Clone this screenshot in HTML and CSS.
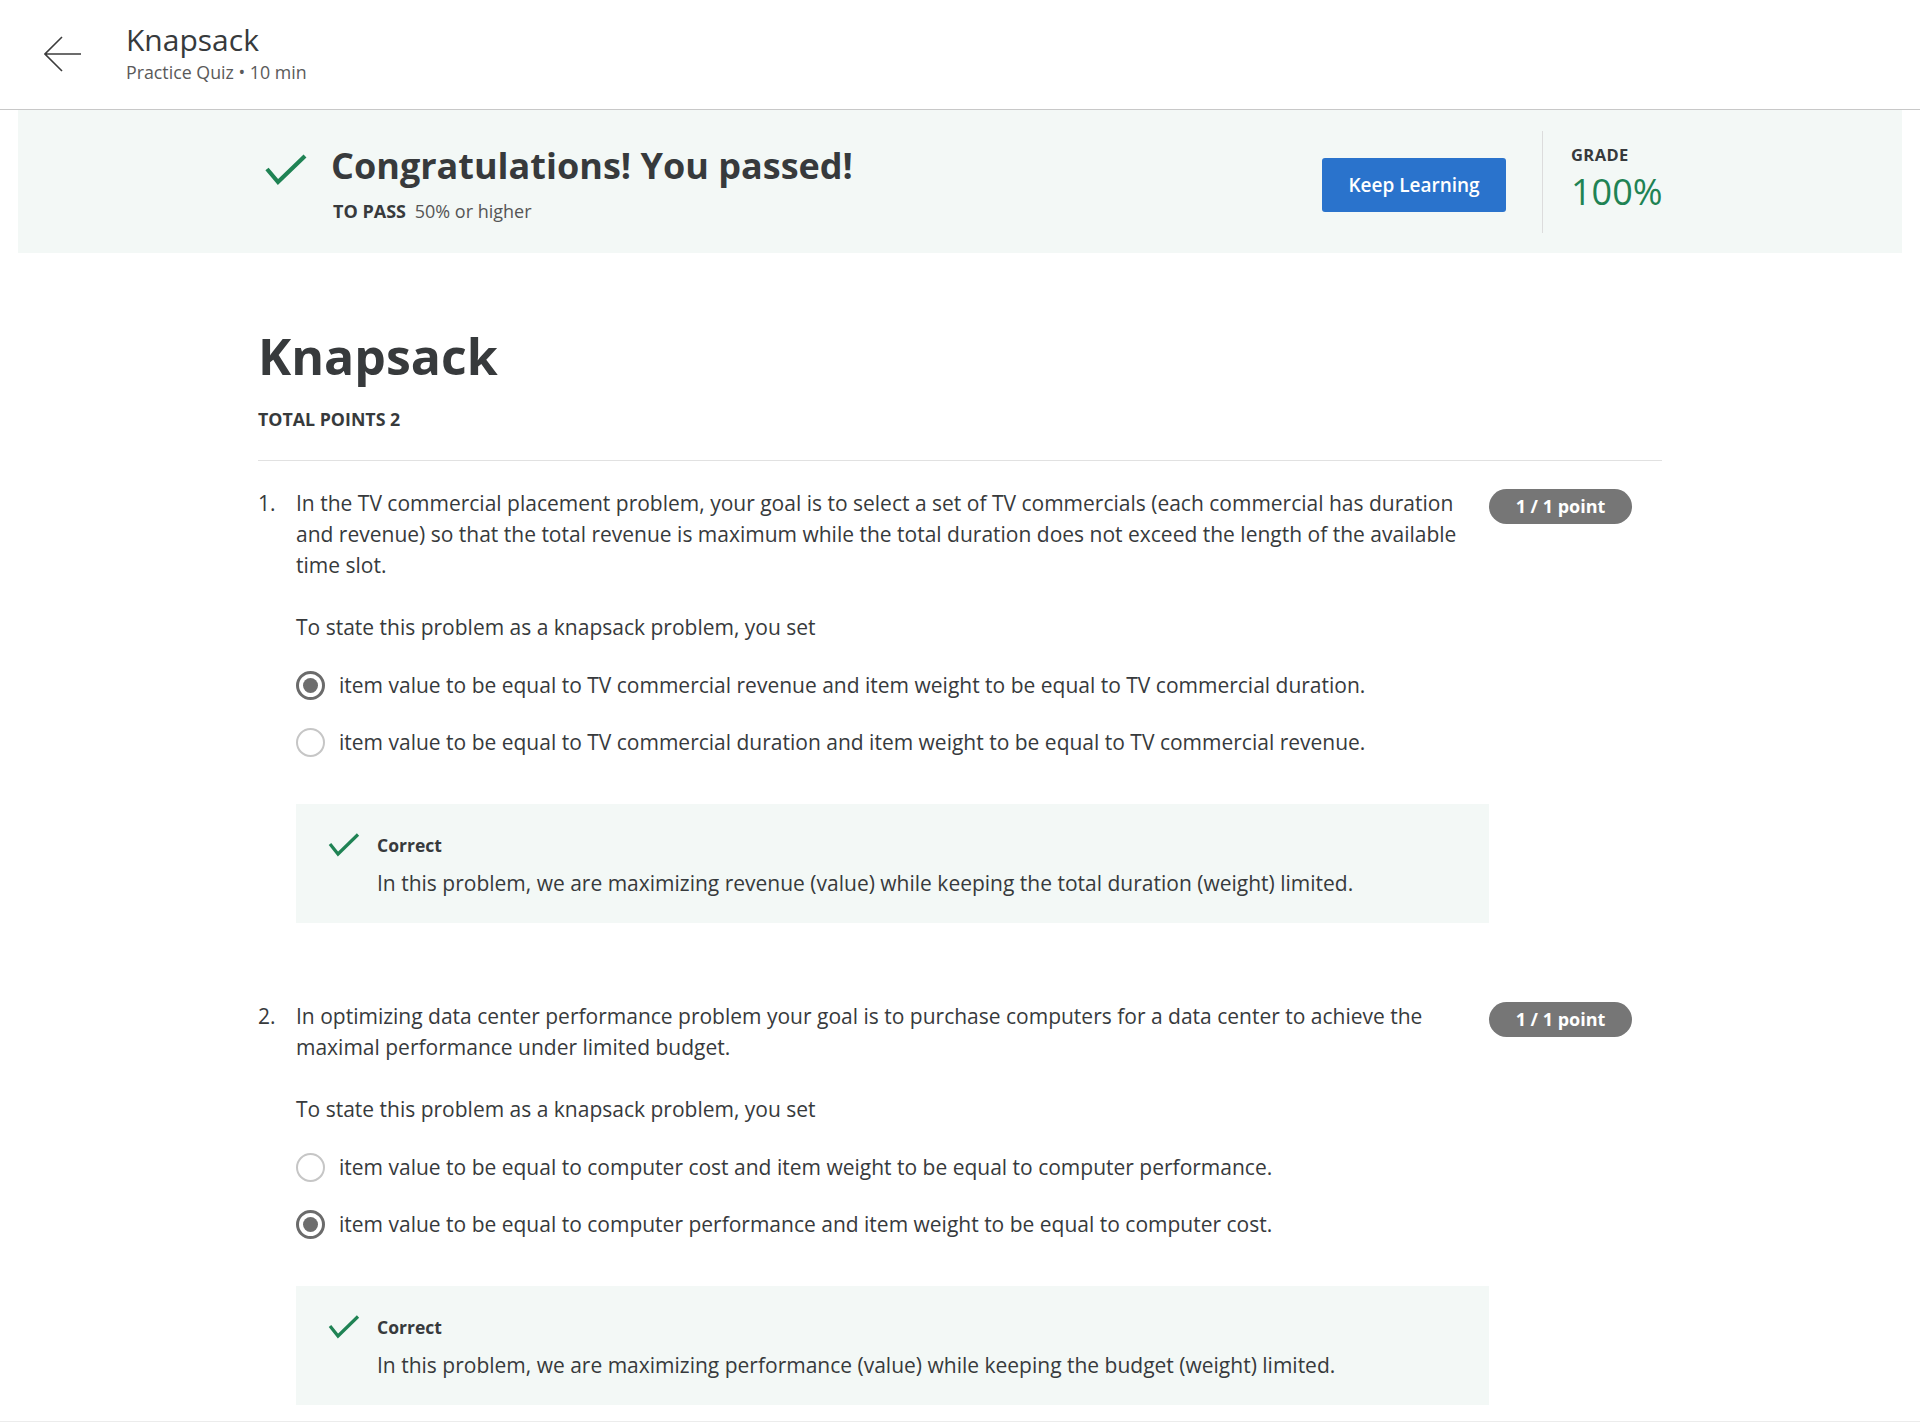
FILE: index.html
```html
<!DOCTYPE html>
<html lang="en">
<head>
<meta charset="utf-8">
<title>Knapsack</title>
<link rel="stylesheet" href="styles.css">
</head>
<body>
<header class="topbar">
  <a class="back" href="#" aria-label="Back">
    <svg width="38" height="36" viewBox="0 0 38 36"><path d="M18 1 L1 18 L18 35 M1 18 H37" fill="none" stroke="#3c3c3c" stroke-width="1.6"/></svg>
  </a>
  <div class="titles">
    <div class="title">Knapsack</div>
    <div class="subtitle">Practice Quiz • 10 min</div>
  </div>
</header>

<section class="banner">
  <div class="banner-inner">
    <div class="pass">
      <svg class="pass-check" width="44" height="34" viewBox="0 0 44 34"><path d="M3 15 L14 28 L41 2" fill="none" stroke="#1f8354" stroke-width="4.2"/></svg>
      <div class="pass-text">
        <h2 class="headline">Congratulations! You passed!</h2>
        <div class="topass"><span class="topass-label">TO PASS</span> 50% or higher</div>
      </div>
    </div>
    <button class="keep">Keep Learning</button>
    <div class="grade">
      <div class="grade-label">GRADE</div>
      <div class="grade-val">100%</div>
    </div>
  </div>
</section>

<main class="content">
  <h1 class="quiz-title">Knapsack</h1>
  <div class="total">TOTAL POINTS 2</div>
  <div class="divider"></div>

  <div class="question">
    <div class="qnum">1.</div>
    <div class="qbody">
      <p class="qtext">In the TV commercial placement problem, your goal is to select a set of TV commercials (each commercial has duration and revenue) so that the total revenue is maximum while the total duration does not exceed the length of the available time slot.</p>
      <p class="qtext qsub">To state this problem as a knapsack problem, you set</p>
      <div class="options">
        <div class="opt"><span class="radio checked"></span><span class="opt-text">item value to be equal to TV commercial revenue and item weight to be equal to TV commercial duration.</span></div>
        <div class="opt"><span class="radio"></span><span class="opt-text">item value to be equal to TV commercial duration and item weight to be equal to TV commercial revenue.</span></div>
      </div>
      <div class="feedback">
        <svg class="fb-check" width="32" height="24" viewBox="0 0 32 24"><path d="M2 11 L10 21 L30 1.5" fill="none" stroke="#1f8354" stroke-width="3.2"/></svg>
        <div class="fb-text">
          <div class="fb-title">Correct</div>
          <div class="fb-body">In this problem, we are maximizing revenue (value) while keeping the total duration (weight) limited.</div>
        </div>
      </div>
    </div>
    <div class="qpts"><span class="pill">1 / 1 point</span></div>
  </div>

  <div class="question q2">
    <div class="qnum">2.</div>
    <div class="qbody">
      <p class="qtext">In optimizing data center performance problem your goal is to purchase computers for a data center to achieve the maximal performance under limited budget.</p>
      <p class="qtext qsub">To state this problem as a knapsack problem, you set</p>
      <div class="options">
        <div class="opt"><span class="radio"></span><span class="opt-text">item value to be equal to computer cost and item weight to be equal to computer performance.</span></div>
        <div class="opt"><span class="radio checked"></span><span class="opt-text">item value to be equal to computer performance and item weight to be equal to computer cost.</span></div>
      </div>
      <div class="feedback">
        <svg class="fb-check" width="32" height="24" viewBox="0 0 32 24"><path d="M2 11 L10 21 L30 1.5" fill="none" stroke="#1f8354" stroke-width="3.2"/></svg>
        <div class="fb-text">
          <div class="fb-title">Correct</div>
          <div class="fb-body">In this problem, we are maximizing performance (value) while keeping the budget (weight) limited.</div>
        </div>
      </div>
    </div>
    <div class="qpts"><span class="pill">1 / 1 point</span></div>
  </div>
</main>
<div class="bottom-line"></div>
</body>
</html>
```

FILE: styles.css
```css
* { box-sizing: border-box; }
html, body { margin: 0; padding: 0; background: #fff; }
body {
  font-family: "Open Sans", "Noto Sans", "Liberation Sans", sans-serif;
  color: #373a3c;
}

/* Top bar */
.topbar {
  height: 110px;
  border-bottom: 1px solid #c8c8c8;
  display: flex;
  align-items: center;
  padding-left: 44px;
}
.back { display: flex; width: 38px; height: 36px; margin-top: -2px; }
.titles { margin-left: 44px; margin-top: -3px; }
.title { font-size: 30px; line-height: 36px; color: #373a3c; }
.subtitle { font-size: 17.8px; line-height: 24px; color: #5a5a5a; margin-top: 2px; }

/* Banner */
.banner {
  margin: 0 18px;
  height: 143px;
  background: #f3f8f6;
}
.banner-inner {
  width: 1404px;
  height: 100%;
  margin: 0 auto;
  display: flex;
  align-items: center;
}
.pass { flex: 1; display: flex; align-items: flex-start; padding-left: 6px; margin-top: 4px; }
.pass-check { margin-top: 10px; margin-right: 23px; flex: none; }
.headline {
  margin: 0;
  font-size: 36px;
  line-height: 44px;
  font-weight: 700;
  color: #373a3c;
}
.topass { font-size: 18px; line-height: 26px; margin-top: 10px; color: #555; padding-left: 2px; }
.topass-label { font-weight: 700; color: #373a3c; margin-right: 4px; }
.keep {
  width: 184px;
  height: 54px;
  border: none;
  border-radius: 3px;
  background: #2a73cc;
  color: #fff;
  font-family: inherit;
  font-size: 19px;
  font-weight: 600;
  margin-top: 6px;
  padding: 0;
}
.grade {
  margin-left: 36px;
  width: 120px;
  height: 102px;
  border-left: 1px solid #dcdcdc;
  padding-left: 28px;
  padding-top: 13px;
}
.grade-label { font-size: 16.5px; line-height: 22px; font-weight: 700; color: #373a3c; letter-spacing: 0.4px; }
.grade-val { font-size: 36px; line-height: 49px; color: #1f8354; margin-top: 1px; }

/* Content */
.content { width: 1404px; margin: 0 auto; }
.quiz-title {
  margin: 73px 0 0;
  font-size: 50px;
  line-height: 60px;
  font-weight: 700;
  color: #373a3c;
}
.total { margin-top: 21px; font-size: 17.8px; line-height: 24px; font-weight: 700; color: #373a3c; }
.divider { height: 1px; background: #e1e1e1; margin-top: 29px; }

.question { display: flex; margin-top: 27px; }
.question.q2 { margin-top: 78px; }
.qnum { width: 38px; flex: none; font-size: 21px; line-height: 31px; color: #373a3c; }
.qbody { width: 1193px; flex: none; }
.qtext { margin: 0; font-size: 21px; line-height: 31px; color: #373a3c; }
.qsub { margin-top: 31px; }
.options { margin-top: 27px; display: flex; flex-direction: column; gap: 26px; }
.opt { display: flex; align-items: center; height: 31px; }
.radio {
  width: 29px; height: 29px; flex: none;
  border-radius: 50%;
  border: 2px solid #c6c6c6;
  margin-right: 14px;
  position: relative;
  background: #fff;
}
.radio.checked { border: 3px solid #6b6b6b; }
.radio.checked::after {
  content: "";
  position: absolute;
  left: 4px; top: 4px;
  width: 15px; height: 15px;
  border-radius: 50%;
  background: #6e6e6e;
}
.opt-text { font-size: 21px; line-height: 31px; }

.feedback {
  margin-top: 46px;
  background: #f3f8f6;
  display: flex;
  padding: 28px 0 24px 32px;
}
.fb-check { flex: none; margin-top: 1px; margin-right: 17px; }
.fb-title { font-size: 17.5px; line-height: 26px; font-weight: 700; color: #373a3c; }
.fb-body { font-size: 21px; line-height: 31px; margin-top: 10px; color: #373a3c; }

.qpts { flex: none; padding-top: 1px; }
.pill {
  display: inline-block;
  width: 143px;
  height: 35px;
  line-height: 35px;
  border-radius: 18px;
  background: #767676;
  color: #fff;
  text-align: center;
  font-size: 18px;
  font-weight: 700;
}
.bottom-line { height: 1px; background: #ececec; margin-top: 16px; }
```
